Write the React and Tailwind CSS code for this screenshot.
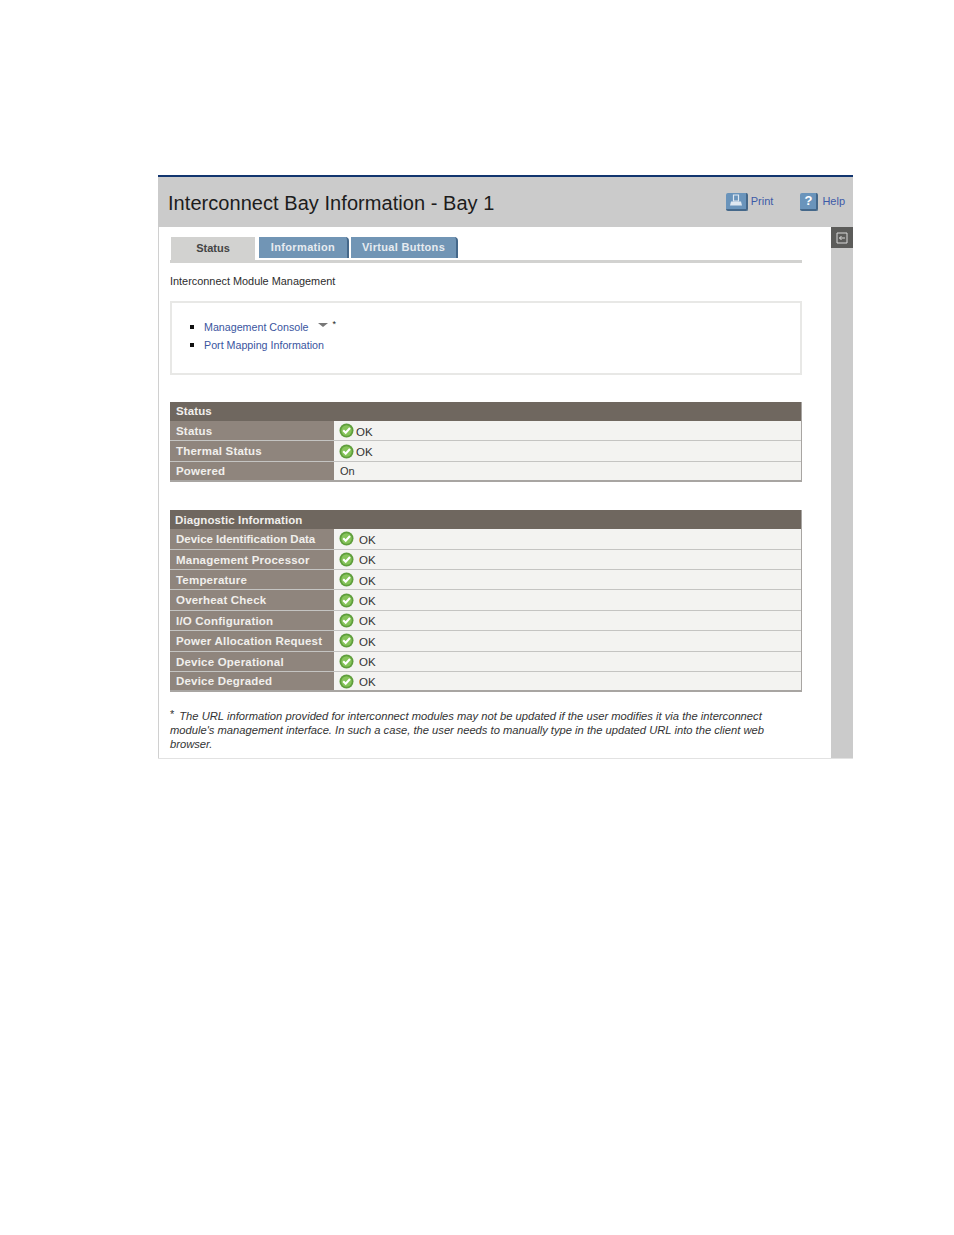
import React from 'react';

const font = { fontFamily: '"Liberation Sans", Arial, sans-serif' };

const CheckIcon = () => (
  <svg width="15" height="15" viewBox="0 0 15 15" className="shrink-0">
    <circle cx="7.5" cy="7.5" r="7" fill="#5f9e3c" />
    <circle cx="7.5" cy="7.5" r="5.2" fill="#86c45a" />
    <path d="M4.2 7.3 L6.7 9.8 L11 5" fill="none" stroke="#fff" strokeWidth="2.1" />
  </svg>
);

const StatusRow = ({ label, value, icon, gap, tracking = 'tracking-[0.2px]' }) => (
  <div className="flex h-[20.4px] border-b border-[#c4c4c2] last:border-b-2 last:border-[#a8a5a2]">
    <div className={`w-[164px] shrink-0 bg-[#8f857d] pl-[6px] pt-[2px] flex items-center text-[11.5px] font-bold text-[#f1efec] ${tracking}`}>
      {label}
    </div>
    <div className="flex-1 bg-[#f3f3f1] pl-[5px] flex items-center text-[#333]">
      {icon && <CheckIcon />}
      {icon ? (
        <span className={`text-[11.5px] pt-[3px] ${gap}`}>{value}</span>
      ) : (
        <span className="text-[11px] pl-[1px]">{value}</span>
      )}
    </div>
  </div>
);

const Section = ({ title, rows, gap, headerPad }) => (
  <div className="w-[632px] border-r border-[#a8a5a2]">
    <div className={`h-[19px] bg-[#6f675f] flex items-center pt-[1px] text-[11.5px] font-bold text-[#f1efec] tracking-[0.1px] ${headerPad}`}>{title}</div>
    {rows.map((r) => (
      <StatusRow key={r.label} label={r.label} value={r.value} icon={r.icon !== false} gap={gap} tracking={r.tracking} />
    ))}
  </div>
);

const statusRows = [
  { label: 'Status', value: 'OK' },
  { label: 'Thermal Status', value: 'OK' },
  { label: 'Powered', value: 'On', icon: false },
];

const diagRows = [
  { label: 'Device Identification Data', value: 'OK', tracking: 'tracking-[-0.03px]' },
  { label: 'Management Processor', value: 'OK' },
  { label: 'Temperature', value: 'OK' },
  { label: 'Overheat Check', value: 'OK' },
  { label: 'I/O Configuration', value: 'OK' },
  { label: 'Power Allocation Request', value: 'OK' },
  { label: 'Device Operational', value: 'OK' },
  { label: 'Device Degraded', value: 'OK' },
];

export default function App() {
  return (
    <div className="min-h-[1235px] bg-white pt-[175px] pl-[158px]" style={font}>
      <div className="w-[695px] h-[584px] flex flex-col border-t-2 border-[#12356f] border-b border-b-[#e2e2e2]">
        <div className="h-[50px] shrink-0 bg-[#cbcbcb] flex items-center pl-[10px] pb-[1px]">
          <h1 className="text-[20px] text-[#1c1c1c] tracking-[0.05px] pt-[2px]">Interconnect Bay Information - Bay 1</h1>
          <div className="ml-auto flex items-center pr-[8px]">
            <div className="w-[22px] h-[18px] rounded-[2px] bg-[#6a94bb] border-r-2 border-b-2 border-[#45688a] flex items-center justify-center">
              <svg width="14" height="13" viewBox="0 0 14 13">
                <path d="M4.5 1h5v6h-5z" fill="none" stroke="#dfe8f1" strokeWidth="1.2" />
                <path d="M2 7.5h10l1 4H1z" fill="#dfe8f1" />
              </svg>
            </div>
            <span className="ml-[3px] text-[11px] text-[#3d5aa8]">Print</span>
            <div className="ml-[27px] w-[18px] h-[18px] rounded-[2px] bg-[#6a94bb] border-r-2 border-b-2 border-[#45688a] flex items-center justify-center text-[13px] font-bold text-white">?</div>
            <span className="ml-[4px] text-[11px] text-[#3d5aa8]">Help</span>
          </div>
        </div>

        <div className="flex-1 flex min-h-0">
          <div className="w-[673px] border-l border-[#d0d0d0] pl-[11px] pt-[10px]">
            <div className="w-[632px] h-[26px] border-b-[3px] border-[#d2d2d0] flex">
              <div className="ml-[1px] w-[84px] h-[23px] bg-[#d2d2d0] flex items-center justify-center text-[11px] font-bold text-[#444]">Status</div>
              <div className="ml-[4px] w-[90px] h-[21px] bg-[#7195b5] border-r-2 border-[#45688a] rounded-tr-[4px] flex items-center justify-center text-[11px] font-bold tracking-[0.35px] text-[#e6ebf0]">Information</div>
              <div className="ml-[2px] w-[107px] h-[21px] bg-[#7195b5] border-r-2 border-[#45688a] rounded-tr-[4px] flex items-center justify-center text-[11px] font-bold tracking-[0.3px] text-[#e6ebf0]">Virtual Buttons</div>
            </div>

            <p className="mt-[11px] text-[10.9px] leading-[14px] text-[#2d2d2d]">Interconnect Module Management</p>

            <div className="mt-[13px] w-[632px] h-[74px] border-2 border-[#e8e8e6] pl-[18px] pt-[15px]">
              <div className="flex items-center h-[18px] text-[10.7px] text-[#3a55a0]">
                <span className="w-[4px] h-[4px] bg-[#111] mr-[10px]" />
                <span>Management Console</span>
                <span className="ml-[9px] mb-[4px] w-0 h-0 border-x-[5px] border-x-transparent border-t-[4px] border-t-[#777]" />
                <span className="ml-[5px] mb-[5px] text-[9px] leading-none text-[#222]">*</span>
              </div>
              <div className="flex items-center h-[18px] text-[10.7px] text-[#3a55a0]">
                <span className="w-[4px] h-[4px] bg-[#111] mr-[10px]" />
                <span>Port Mapping Information</span>
              </div>
            </div>

            <div className="mt-[27px]">
              <Section title="Status" rows={statusRows} gap="ml-[2px]" headerPad="pl-[6px]" />
            </div>
            <div className="mt-[28px]">
              <Section title="Diagnostic Information" rows={diagRows} gap="ml-[5px]" headerPad="pl-[5px]" />
            </div>

            <p className="mt-[17px] w-[600px] text-[11.2px] italic leading-[14px] text-[#333]">
              <span className="not-italic text-[11px] leading-none align-[2px] mr-[5px]">*</span>
              The URL information provided for interconnect modules may not be updated if the user modifies it via the interconnect module's management interface. In such a case, the user needs to manually type in the updated URL into the client web browser.
            </p>
          </div>

          <div className="w-[22px] bg-[#cbcbcb]">
            <div className="h-[21px] bg-[#5c5c5a] flex items-center justify-center">
              <svg width="12" height="12" viewBox="0 0 12 12">
                <path d="M1 1h10v10H1z" fill="none" stroke="#d8d8d8" />
                <path d="M9 6H3.5M5.5 4 3.5 6l2 2" fill="none" stroke="#d8d8d8" />
              </svg>
            </div>
          </div>
        </div>
      </div>
    </div>
  );
}
